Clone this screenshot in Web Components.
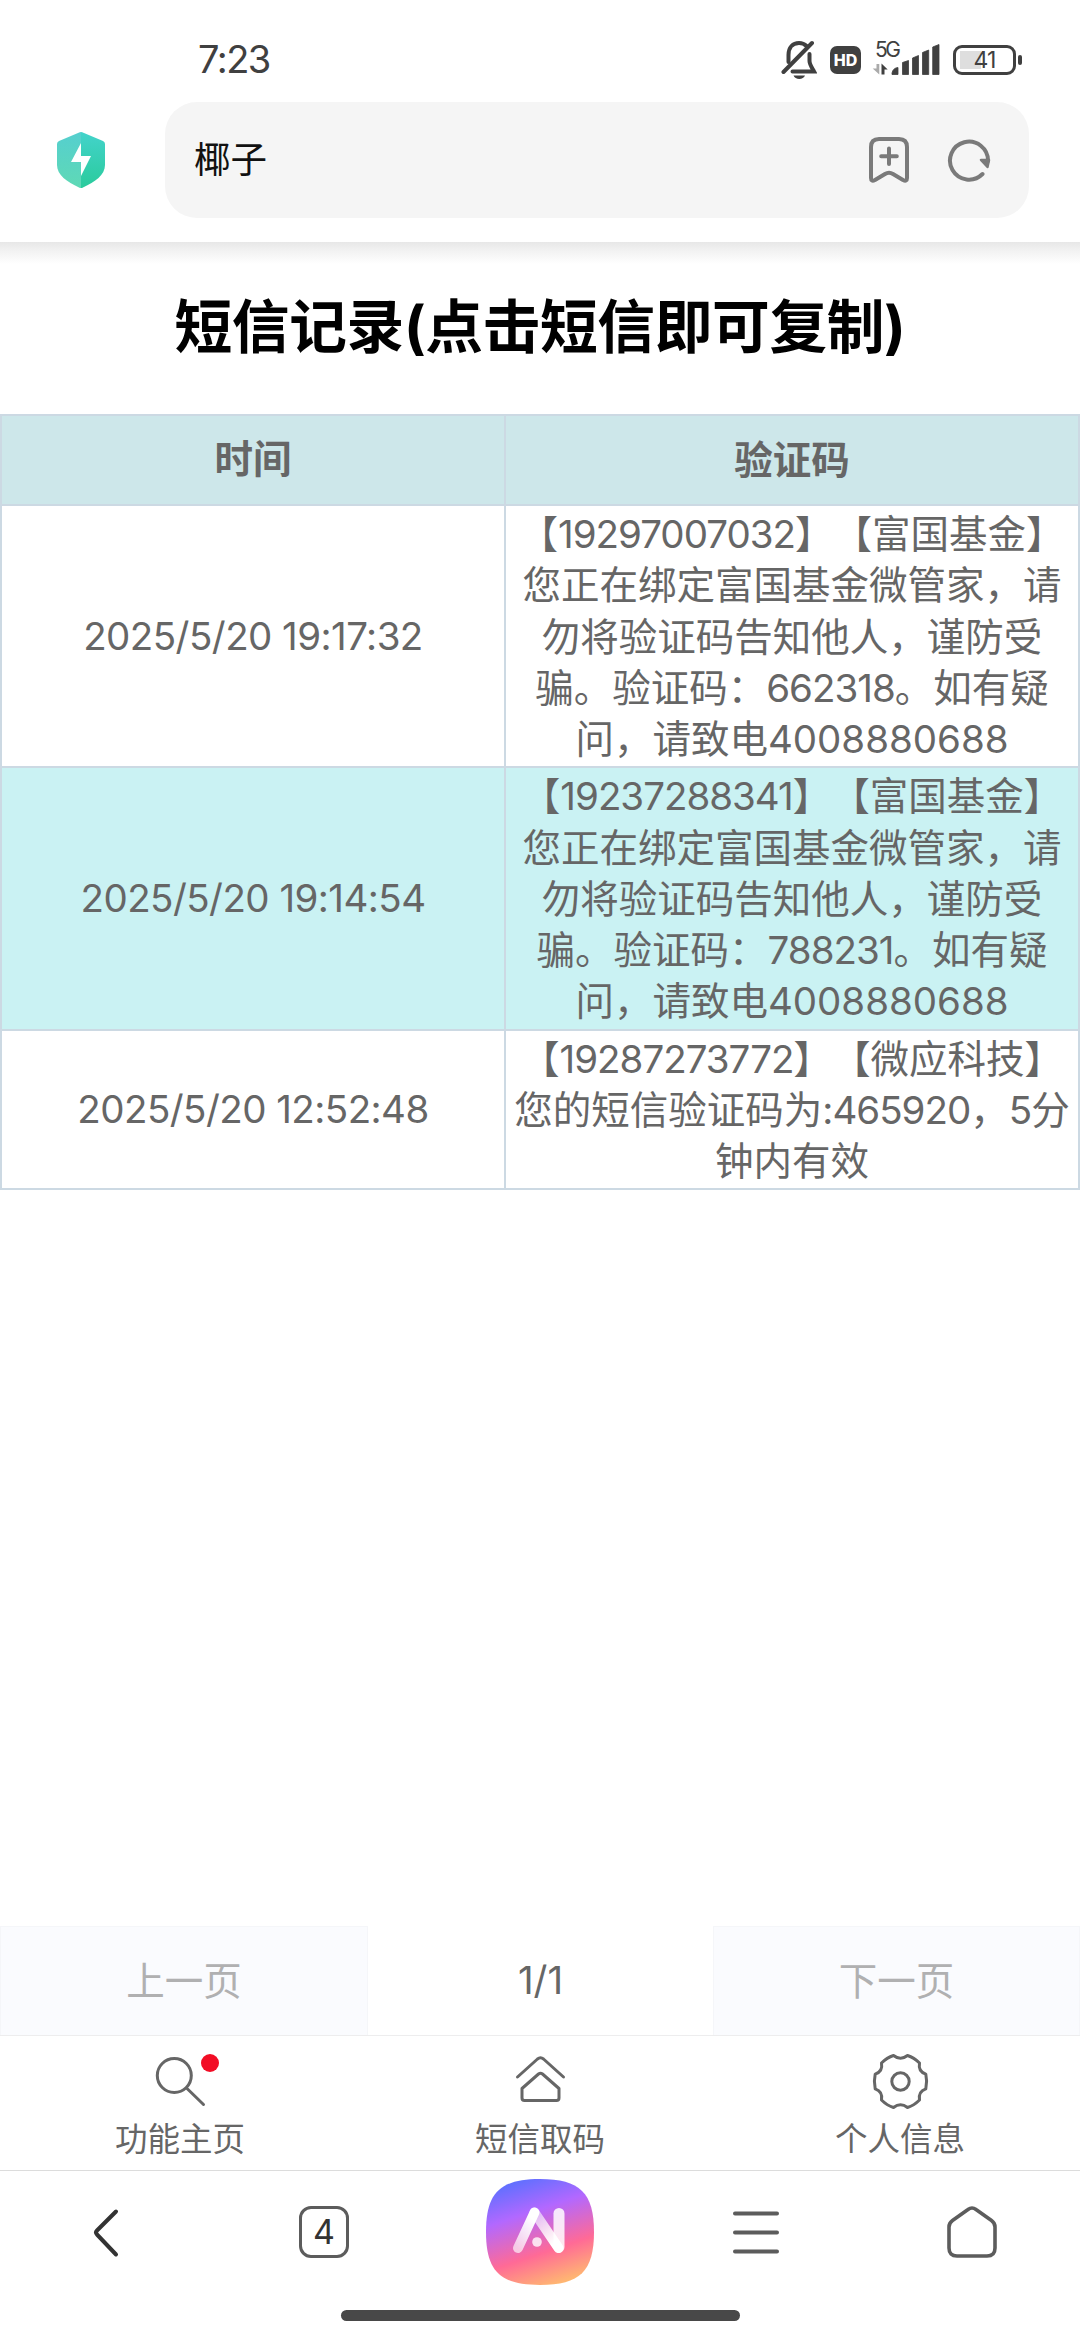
<!DOCTYPE html>
<html lang="zh-CN">
<head>
<meta charset="utf-8">
<title>短信记录</title>
<style>
html, body {
  margin: 0;
  padding: 0;
}

body {
  width: 1080px;
  height: 2340px;
  overflow: hidden;
  display: flex;
  flex-direction: column;
  background-color: #fff;
  color: #666;
  font-family: Inter, "Noto Sans CJK SC", sans-serif;
  font-size: 38.5px;
  text-spacing-trim: space-all;
}

main {
  flex: 1;
}
</style>
</head>
<body>
<status-bar time="7:23" battery="41"></status-bar>
<address-bar>椰子</address-bar>
<page-title>短信记录(点击短信即可复制)</page-title>
<main>
  <sms-table>
    <sms-row head><span slot="time">时间</span>验证码</sms-row>
    <sms-row>
      <span slot="time">2025/5/20 19:17:32</span>
      【<sms-num tight>19297007032</sms-num>】【富国基金】<br>您正在绑定富国基金微管家，请<br>勿将验证码告知他人，谨防受<br>骗。验证码：<sms-num tight>662318</sms-num>。如有疑<br>问，请致电<sms-num>4008880688</sms-num>
    </sms-row>
    <sms-row active>
      <span slot="time">2025/5/20 19:14:54</span>
      【<sms-num tight>19237288341</sms-num>】【富国基金】<br>您正在绑定富国基金微管家，请<br>勿将验证码告知他人，谨防受<br>骗。验证码：<sms-num tight>788231</sms-num>。如有疑<br>问，请致电<sms-num>4008880688</sms-num>
    </sms-row>
    <sms-row>
      <span slot="time">2025/5/20 12:52:48</span>
      【<sms-num tight>19287273772</sms-num>】【微应科技】<br>您的短信验证码为<sms-num tight>:465920</sms-num>，<sms-num tight>5</sms-num>分<br>钟内有效
    </sms-row>
  </sms-table>
</main>
<page-pager><span slot="prev">上一页</span>1/1<span slot="next">下一页</span></page-pager>
<tab-bar>
  <tab-item icon="search" badge>功能主页</tab-item>
  <tab-item icon="house">短信取码</tab-item>
  <tab-item icon="gear">个人信息</tab-item>
</tab-bar>
<browser-nav tabs="4"></browser-nav>

<script>
/**
 * Base class, clones the markup of the element into an open shadow root.
 */
class BaseElement extends HTMLElement {
  constructor () {
    super()
    const template = document.createElement('template')
    template.innerHTML = this.constructor.markup
    this.shadow = this.attachShadow({ mode: 'open' })
    this.shadow.appendChild(document.importNode(template.content, true))
  }
}

class StatusBar extends BaseElement {
  static markup = `
<style>
:host {
  display: flex;
  align-items: center;
  box-sizing: border-box;
  height: 102px;
  padding: 0 58px 0 198px;
  color: #404040;
}

#time {
  flex: 1;
  font-size: 38px;
  line-height: 44px;
  margin-top: 16px;
  letter-spacing: -1.5px;
}

svg {
  display: block;
  margin-top: 17px;
}

#hd {
  width: 31px;
  height: 28px;
  margin: 17px 11px 0 13px;
  border-radius: 7px;
  background-color: #404040;
  color: #fff;
  font-size: 16px;
  font-weight: 800;
  line-height: 28px;
  text-align: center;
}

#battery {
  display: flex;
  align-items: center;
  margin: 17px 0 0 13px;
}

#cell {
  box-sizing: border-box;
  width: 63px;
  height: 30px;
  padding: 2px 4px;
  border: 3px solid #404040;
  border-radius: 9px;
  background: linear-gradient(#dedede, #dedede) 4px 3px / 21px 18px no-repeat;
  font-size: 23px;
  line-height: 20px;
  text-align: center;
  letter-spacing: -1px;
}

#tip {
  width: 4px;
  height: 10px;
  margin-left: 2px;
  border-radius: 2px;
  background-color: #404040;
}
</style>
<div id="time"></div>
<svg width="36" height="40" viewBox="0 0 36 40" fill="none" stroke="#404040" stroke-width="4" stroke-linecap="round">
  <path d="M7.500 22V15C7.500 7 12 3 18 3C21 3 23.500 4 25.500 6"/>
  <path d="M28.500 14V21C28.500 24 30.500 27 33 31.500H11.500"/>
  <path d="M2.500 32L31 3"/>
  <path d="M12.500 35.500H24C22.500 40 14 40 12.500 35.500Z" fill="#404040" stroke="none"/>
</svg>
<div id="hd">HD</div>
<svg width="68" height="60" viewBox="-3 -10 68 60">
  <text x="0" y="17" font-size="21" fill="#404040" textLength="26">5G</text>
  <path d="M4.300 24V34.500L-2.300 28.500H1.500V24Z" fill="#aaa"/>
  <path d="M6.500 34.500V23.500L12.700 29.500H9.500V34.500Z" fill="#404040"/>
  <path d="M17 33Q18 28 23 27.500V34.500H17ZM27.500 22.500L33.500 20.500V34.500H27.500ZM37.500 18L43.500 15.500V34.500H37.500ZM47.500 12.500L53.700 10V34.500H47.500ZM57.700 7L64 4.500V34.500H57.700Z" fill="#404040" stroke="#404040" stroke-width=".8" stroke-linejoin="round"/>
</svg>
<div id="battery"><div id="cell"></div><div id="tip"></div></div>`

  connectedCallback () {
    this.shadow.getElementById('time').textContent = this.getAttribute('time')
    this.shadow.getElementById('cell').textContent = this.getAttribute('battery')
  }
}

class AddressBar extends BaseElement {
  static markup = `
<style>
:host {
  display: flex;
  align-items: flex-start;
  height: 140px;
  flex: none;
  color: #111;
}

/* soft edge below the toolbar */
:host::after {
  content: '';
  position: absolute;
  top: 242px;
  left: 0;
  width: 100%;
  height: 22px;
  background: linear-gradient(#e7e7e7, #f2f2f2 40%, #fff);
}

#shield {
  margin: 30px 60px 0 57px;
}

#field {
  box-sizing: border-box;
  display: flex;
  align-items: center;
  width: 864px;
  height: 116px;
  padding: 0 38px 0 29px;
  border-radius: 32px;
  background-color: #f5f5f5;
  font-size: 36.5px;
}

#text {
  flex: 1;
  line-height: 50px;
}

svg {
  display: block;
}
</style>
<svg id="shield" width="48" height="56" viewBox="0 0 48 56">
  <defs>
    <linearGradient id="left" x1="0" y1="0" x2="0" y2="1"><stop offset="0" stop-color="#55cfcf"/><stop offset="1" stop-color="#5fd9b5"/></linearGradient>
    <linearGradient id="right" x1="0" y1="0" x2="0" y2="1"><stop offset="0" stop-color="#43d3cb"/><stop offset="1" stop-color="#2acb9c"/></linearGradient>
  </defs>
  <path d="M24 0Q25 0 27 1L46 9Q48 10 48 12V33C48 43 38 50 26 55.500Q25 56 24 56Z" fill="url(#right)"/>
  <path d="M24 0Q23 0 21 1L2 9Q0 10 0 12V33C0 43 10 50 22 55.500Q23 56 24 56Z" fill="url(#left)"/>
  <path d="M24 11L14 30H24V44L34 24H24Z" fill="#fff"/>
</svg>
<div id="field">
  <div id="text"><slot></slot></div>
  <svg width="40" height="46" viewBox="0 0 40 46" fill="none" stroke="#7a7a7a" stroke-width="4" stroke-linecap="round" stroke-linejoin="round">
    <path d="M10 2H30Q38 2 38 10V41Q38 45 34 43L24 37Q20 34.500 16 37L6 43Q2 45 2 41V10Q2 2 10 2ZM20 11.500V27M12.200 19.300H27.800"/>
  </svg>
  <svg width="44" height="44" viewBox="0 0 44 44" style="margin-left: 38px" fill="none" stroke="#7a7a7a" stroke-width="4" stroke-linecap="round">
    <path d="M35.500 36A19 19 0 1 1 41 23"/>
    <path d="M34 22L42 22L40.500 29Z" fill="#7a7a7a" stroke-width="2.500" stroke-linejoin="round"/>
  </svg>
</div>`
}

class PageTitle extends BaseElement {
  static markup = `
<style>
:host {
  display: block;
  flex: none;
  box-sizing: border-box;
  height: 172px;
  padding-top: 45px;
  color: #000;
  font-size: 57.75px;
  font-weight: 700;
  line-height: 80px;
  text-align: center;
  letter-spacing: -0.4px;
}
</style>
<slot></slot>`
}

class SmsTable extends BaseElement {
  static markup = `
<style>
:host {
  display: block;
  border: 2px solid #ccd9e3;
  border-bottom: 0;
}
</style>
<slot></slot>`
}

class SmsRow extends BaseElement {
  static markup = `
<style>
:host {
  display: grid;
  grid-template-columns: 502px 1fr;
  border-bottom: 2px solid #ccd9e3;
  line-height: 51.25px;
  text-align: center;
}

:host([head]) {
  height: 88px;
  background-color: #cde7ea;
  font-weight: 700;
}

:host([active]) {
  background-color: #caf2f3;
}

div {
  display: flex;
  align-items: center;
  justify-content: center;
}

#message {
  border-left: 2px solid #ccd9e3;
  padding: 3px 0 1px;
}

p {
  margin: 0;
  white-space: nowrap;
}

:host(:not([head])) slot[name="time"] {
  letter-spacing: -0.55px;
}
</style>
<div><slot name="time"></slot></div>
<div id="message"><p><slot></slot></p></div>`
}

/* run of digits inside of a message, no whitespace allowed around the slot */
class SmsNum extends BaseElement {
  static markup = '<style>:host { display: inline; } :host([tight]) { letter-spacing: -1px; }</style><slot></slot>'
}

class PagePager extends BaseElement {
  static markup = `
<style>
:host {
  display: grid;
  grid-template-columns: 368px 1fr 367px;
  height: 109px;
  border-bottom: 1px solid #ededee;
  line-height: 108px;
  text-align: center;
}

.button {
  box-sizing: border-box;
  border: 1px solid #f5f6f9;
  border-bottom: 0;
  background-color: #fafbfe;
  color: #b0b0b1;
}
</style>
<div class="button"><slot name="prev"></slot></div>
<div><slot></slot></div>
<div class="button"><slot name="next"></slot></div>`
}

class TabBar extends BaseElement {
  static markup = `
<style>
:host {
  display: grid;
  grid-template-columns: repeat(3, 1fr);
  height: 134px;
}
</style>
<slot></slot>`
}

const tabIcons = {
  search: '<circle cx="24.300" cy="23.500" r="17"/><path d="M36.500 36L53.500 52.500"/>',
  house: '<path d="M17.500 25L37.500 7Q40.500 4.500 43.500 7L63.500 25"/><path d="M22 36.500L38.500 22Q40.500 20.500 42.500 22L59 36.500V46Q59 48.500 56.500 48.500H24.500Q22 48.500 22 46Z"/>',
  gear: '<circle cx="40.500" cy="29.500" r="8.700"/><path d="M33.500 3.500Q40.500 9 47.500 3.500Q54 5.500 59.500 11Q58 19.500 65.800 22.200Q67.500 29.500 65.800 36.800Q58 39.500 59.500 48Q54 53.500 47.500 55.500Q40.500 50 33.500 55.500Q27 53.500 21.500 48Q23 39.500 15.200 36.800Q13.500 29.500 15.200 22.200Q23 19.500 21.500 11Q27 5.500 33.500 3.500Z"/>'
}

class TabItem extends BaseElement {
  static markup = `
<style>
:host {
  display: flex;
  flex-direction: column;
  align-items: center;
  padding-top: 16px;
  font-size: 32.5px;
  line-height: 44px;
}

#icon {
  position: relative;
  width: 80px;
  height: 66px;
}

svg {
  display: block;
}

#badge {
  display: none;
  position: absolute;
  left: 61px;
  top: 2px;
  width: 18px;
  height: 18px;
  border-radius: 50%;
  background-color: #f20d25;
}

:host([badge]) #badge {
  display: block;
}
</style>
<div id="icon">
  <svg width="80" height="60" viewBox="0 0 80 60" fill="none" stroke="#666" stroke-width="3" stroke-linecap="round" stroke-linejoin="round"></svg>
  <div id="badge"></div>
</div>
<slot></slot>`

  connectedCallback () {
    this.shadow.querySelector('svg').innerHTML = tabIcons[this.getAttribute('icon')]
    // The search icon sits a bit more to the right
    if (this.getAttribute('icon') === 'search') {
      this.shadow.querySelector('svg').setAttribute('viewBox', '-10 0 80 60')
    }
  }
}

class BrowserNav extends BaseElement {
  static markup = `
<style>
:host {
  display: block;
  flex: none;
  box-sizing: border-box;
  height: 170px;
  border-top: 1px solid #dcdcdc;
}

#buttons {
  display: grid;
  grid-template-columns: repeat(5, 1fr);
  place-items: center;
  height: 121px;
}

svg {
  display: block;
}

#tabs {
  box-sizing: border-box;
  width: 50px;
  height: 52px;
  border: 3.5px solid #5c5c5c;
  border-radius: 12px;
  color: #333;
  font-size: 34px;
  line-height: 46px;
  text-align: center;
}

#home-line {
  width: 399px;
  height: 11px;
  margin: 18px auto 0;
  border-radius: 6px;
  background-color: #484848;
}
</style>
<div id="buttons">
  <svg width="50" height="52" viewBox="0 0 50 52" fill="none" stroke="#333" stroke-width="4" stroke-linecap="round">
    <path d="M33 5.500L14 24.500Q12 26.500 14 28.500L33 48.500"/>
  </svg>
  <div id="tabs"></div>
  <svg width="108" height="106" viewBox="0 0 108 106" fill="none" stroke-linecap="round" stroke-linejoin="round">
    <defs>
      <linearGradient id="bg" x1=".28" y1="0" x2=".62" y2="1">
        <stop offset="0" stop-color="#5b70ff"/>
        <stop offset=".32" stop-color="#b268ff"/>
        <stop offset=".7" stop-color="#ff6a96"/>
        <stop offset="1" stop-color="#ffb672"/>
      </linearGradient>
      <linearGradient id="leg" x1="0" y1="1" x2=".5" y2="0"><stop offset="0" stop-color="#fff" stop-opacity=".65"/><stop offset="1" stop-color="#fff"/></linearGradient>
      <linearGradient id="diag" x1="0" y1="0" x2=".6" y2="1"><stop offset="0" stop-color="#fff" stop-opacity=".5"/><stop offset="1" stop-color="#fff"/></linearGradient>
    </defs>
    <path d="M54 0C94 0 108 14 108 53S94 106 54 106S0 92 0 53S14 0 54 0Z" fill="url(#bg)"/>
    <path d="M32 69L48.500 33.500" stroke="url(#leg)" stroke-width="10"/>
    <path d="M48.500 33.500L72.500 69" stroke="url(#diag)" stroke-width="10"/>
    <path d="M73 34.500V68" stroke="#fff" stroke-opacity=".85" stroke-width="11"/>
    <circle cx="51" cy="63" r="4.800" fill="#fff" fill-opacity=".8"/>
  </svg>
  <svg width="50" height="52" viewBox="0 0 50 52" stroke="#5c5c5c" stroke-width="4" stroke-linecap="round">
    <path d="M4 7.500H46M4 26.500H46M4 45.500H46"/>
  </svg>
  <svg width="50" height="52" viewBox="0 0 50 52" fill="none" stroke="#5c5c5c" stroke-width="3.600">
    <path d="M21 3.500Q25 .500 29 3.500L44.500 14.500Q48 17 48 21V42Q48 50 40 50H10Q2 50 2 42V21Q2 17 5.500 14.500Z"/>
  </svg>
</div>
<div id="home-line"></div>`

  connectedCallback () {
    this.shadow.getElementById('tabs').textContent = this.getAttribute('tabs')
  }
}

window.customElements.define('status-bar', StatusBar)
window.customElements.define('address-bar', AddressBar)
window.customElements.define('page-title', PageTitle)
window.customElements.define('sms-table', SmsTable)
window.customElements.define('sms-row', SmsRow)
window.customElements.define('sms-num', SmsNum)
window.customElements.define('page-pager', PagePager)
window.customElements.define('tab-bar', TabBar)
window.customElements.define('tab-item', TabItem)
window.customElements.define('browser-nav', BrowserNav)
</script>
</body>
</html>
